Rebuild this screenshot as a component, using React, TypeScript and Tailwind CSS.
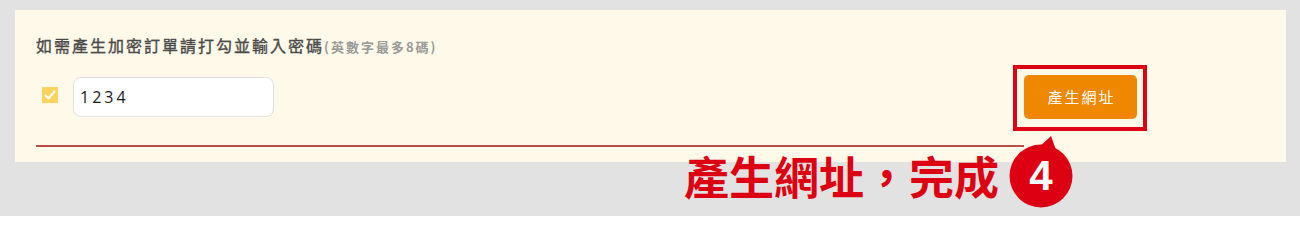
import React from "react";

export default function App() {
  return (
    <div
      className="relative w-[1300px] h-[216px] overflow-hidden bg-[#e2e2e2] pt-[10px] pl-[15px] pr-[14px]"
      style={{ fontFamily: '"Noto Sans CJK TC", "Noto Sans", sans-serif' }}
    >
      <div className="relative h-[152px] bg-[#fff9e9] pl-[21px] pt-[23px]">
        <div className="flex h-[24px] items-baseline whitespace-nowrap leading-[24px]">
          <span className="text-[16px] tracking-[2px] text-[#4a4a4a] [-webkit-text-stroke:0.35px_#4a4a4a]">如需產生加密訂單請打勾並輸入密碼</span>
          <span className="text-[13px] tracking-[2px] font-bold text-[#999999]">(英數字最多8碼)</span>
        </div>
        <div className="mt-[18px] flex h-[44px] items-center justify-between pr-[149px]">
          <div className="flex items-center">
            <div className="ml-[6px] mb-[4px] flex h-[16px] w-[16px] items-center justify-center bg-[#ffd35f]">
              <svg width="12" height="12" viewBox="0 0 12 12" fill="none">
                <polyline points="1.5,6.5 4.5,9.5 10.5,2.5" stroke="#ffffff" strokeWidth="2" strokeLinecap="round" strokeLinejoin="round" />
              </svg>
            </div>
            <div className="ml-[15px] flex h-[40px] w-[201px] items-center rounded-[8px] border border-[#e0e0e0] bg-white pl-[6px]">
              <span className="text-[16px] tracking-[3px] text-[#1a1a1a]" style={{ fontFamily: '"Open Sans", "Liberation Sans", sans-serif' }}>1234</span>
            </div>
          </div>
          <button className="flex h-[44px] w-[113px] items-center justify-center rounded-[5px] bg-[#ef8700] pl-[2px] text-[15px] tracking-[2px] text-white">
            產生網址
          </button>
        </div>
        <div className="mt-[26px] h-[2px] w-[988px] bg-[#bd4d49]" />
        {/* annotation frame */}
        <div className="absolute left-[998px] top-[55px] h-[66px] w-[134px] border-[4px] border-[#dc0012]" />
      </div>
      {/* annotation caption */}
      <div className="absolute left-[684px] top-[148px] whitespace-nowrap text-[45px] font-bold leading-[56px] text-[#dc0012]">
        產生網址，完成
      </div>
      <div className="absolute left-[1008px] top-[134px] h-[74px] w-[66px]">
        <svg width="66" height="74" viewBox="0 0 66 74" className="absolute left-0 top-0">
          <path d="M30 14 L43 2 L48 16 Z" fill="#dc0012" />
          <circle cx="33" cy="42" r="31.5" fill="#dc0012" />
        </svg>
        <span
          className="absolute left-0 top-[16px] flex h-[52px] w-[66px] items-center justify-center text-[42px] font-bold leading-none text-white"
          style={{ fontFamily: '"Liberation Sans", Arial, sans-serif' }}
        >
          4
        </span>
      </div>
    </div>
  );
}
